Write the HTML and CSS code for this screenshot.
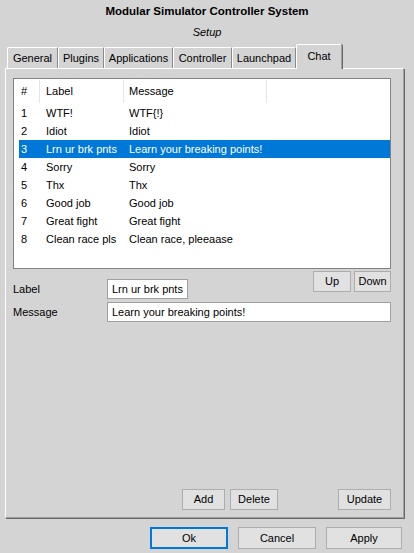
FILE: index.html
```html
<!DOCTYPE html>
<html>
<head>
<meta charset="utf-8">
<link rel="stylesheet" href="styles.css">
</head>
<body>
<div class="window">
  <div class="title">Modular Simulator Controller System</div>
  <div class="subtitle">Setup</div>
  <div class="tabs">
    <div class="tab t-general">General</div>
    <div class="tab t-plugins">Plugins</div>
    <div class="tab t-apps">Applications</div>
    <div class="tab t-controller">Controller</div>
    <div class="tab t-launchpad">Launchpad</div>
    <div class="tab active">Chat</div>
  </div>
  <div class="panel">
    <div class="list">
      <div class="lv-row lv-head"><div class="c c1">#</div><div class="c c2">Label</div><div class="c c3">Message</div></div>
      <div class="lv-row"><div class="c c1">1</div><div class="c c2">WTF!</div><div class="c c3">WTF{!}</div></div>
      <div class="lv-row"><div class="c c1">2</div><div class="c c2">Idiot</div><div class="c c3">Idiot</div></div>
      <div class="lv-row selected"><div class="c c1">3</div><div class="c c2">Lrn ur brk pnts</div><div class="c c3">Learn your breaking points!</div></div>
      <div class="lv-row"><div class="c c1">4</div><div class="c c2">Sorry</div><div class="c c3">Sorry</div></div>
      <div class="lv-row"><div class="c c1">5</div><div class="c c2">Thx</div><div class="c c3">Thx</div></div>
      <div class="lv-row"><div class="c c1">6</div><div class="c c2">Good job</div><div class="c c3">Good job</div></div>
      <div class="lv-row"><div class="c c1">7</div><div class="c c2">Great fight</div><div class="c c3">Great fight</div></div>
      <div class="lv-row"><div class="c c1">8</div><div class="c c2">Clean race pls</div><div class="c c3">Clean race, pleeaase</div></div>
    </div>
    <div class="edit-row first">
      <span class="field-label">Label</span>
      <span class="input short">Lrn ur brk pnts</span>
      <div class="updown">
        <button class="btn up">Up</button>
        <button class="btn down">Down</button>
      </div>
    </div>
    <div class="edit-row second">
      <span class="field-label">Message</span>
      <span class="input long">Learn your breaking points!</span>
    </div>
    <div class="actions">
      <button class="btn add">Add</button>
      <button class="btn delete">Delete</button>
      <button class="btn update">Update</button>
    </div>
  </div>
  <div class="footer">
    <button class="btn dlg default">Ok</button>
    <button class="btn dlg">Cancel</button>
    <button class="btn dlg apply">Apply</button>
  </div>
</div>
</body>
</html>
```

FILE: styles.css
```css
* { box-sizing: border-box; }
html, body {
  margin: 0;
  padding: 0;
  background: #d4d4d4;
}
body {
  font-family: "Liberation Sans", Arial, sans-serif;
  font-size: 11px;
  color: #000;
  width: 414px;
  height: 553px;
  overflow: hidden;
}
.window {
  display: flex;
  flex-direction: column;
}
.title {
  height: 22px;
  line-height: 22px;
  text-align: center;
  font-weight: bold;
  font-size: 11.5px;
}
.subtitle {
  height: 20px;
  line-height: 20px;
  text-align: center;
  font-style: italic;
}
.tabs {
  margin-top: 2px;
  height: 25px;
  margin-bottom: -1px;
  padding-left: 7px;
  display: flex;
  align-items: flex-end;
  position: relative;
  z-index: 1;
}
.tab {
  height: 21px;
  margin-bottom: 1px;
  padding: 0;
  line-height: 20px;
  text-align: center;
  border-top: 1px solid #fff;
  border-left: 1px solid #fff;
  border-right: 1px solid #8a8a8a;
  border-radius: 2px 2px 0 0;
  background: #d4d4d4;
  white-space: nowrap;
}
.t-general { width: 51px; }
.t-plugins { width: 46px; }
.t-apps { width: 69px; }
.t-controller { width: 59px; }
.t-launchpad { width: 64px; }
.tab.active {
  width: 46px;
  height: 25px;
  margin-bottom: 0;
  padding-top: 1px;
  line-height: 20px;
  border-right: 1px solid #a0a0a0;
  box-shadow: 1px 0 0 #696969;
}
.panel {
  margin-left: 5px;
  width: 399px;
  height: 450px;
  border-top: 1px solid #fff;
  border-left: 1px solid #fff;
  border-right: 1px solid #a0a0a0;
  border-bottom: 1px solid #a0a0a0;
  box-shadow: 1px 1px 0 #696969;
  padding: 9px 12px 7px 7px;
  display: flex;
  flex-direction: column;
}
.list {
  height: 191px;
  background: #fff;
  border: 1px solid #828282;
  padding: 0 0 0 5px;
}
.lv-row {
  display: grid;
  grid-template-columns: 21px 84px 143px;
  height: 18px;
  line-height: 18px;
  white-space: nowrap;
}
.lv-head {
  height: 25px;
  line-height: 25px;
}
.lv-head .c {
  border-right: 1px solid #e5e5e5;
  height: 23px;
  margin-top: 1px;
  line-height: 23px;
}
.c1 { padding-left: 2px; }
.c2 { padding-left: 6px; }
.c3 { padding-left: 5px; }
.lv-row.selected {
  background: #0078d7;
  color: #fff;
}
.edit-row {
  display: flex;
  align-items: flex-start;
}
.edit-row.first {
  margin-top: 2px;
  height: 28px;
}
.edit-row.second {
  margin-top: 3px;
}
.field-label {
  width: 94px;
  line-height: 20px;
  height: 20px;
}
.edit-row.first .field-label {
  margin-top: 8px;
}
.input {
  height: 20px;
  line-height: 18px;
  background: #fff;
  border: 1px solid #a0a0a0;
  padding: 0 4px;
  white-space: nowrap;
}
.input.short {
  width: 81px;
  margin-top: 8px;
}
.input.long {
  width: 284px;
}
.updown {
  margin-left: auto;
  display: flex;
  gap: 3px;
}
.btn {
  font-family: "Liberation Sans", Arial, sans-serif;
  font-size: 11px;
  color: #000;
  background: #e1e1e1;
  border: 1px solid #adadad;
  height: 21px;
  padding: 0;
  margin: 0;
  line-height: 19px;
  text-align: center;
}
.btn.up { width: 38px; }
.btn.down { width: 37px; }
.actions {
  margin-top: auto;
  display: flex;
  padding-left: 169px;
}
.btn.add { width: 43px; }
.btn.delete { width: 48px; margin-left: 5px; }
.btn.update { width: 53px; margin-left: auto; }
.footer {
  margin-top: 9px;
  display: flex;
  padding-left: 150px;
  gap: 10px;
}
.btn.dlg {
  width: 78px;
  height: 22px;
}
.btn.dlg.apply { width: 76px; }
.btn.default {
  border: 1px solid #0078d7;
  box-shadow: inset 0 0 0 1px #0078d7;
}
```
